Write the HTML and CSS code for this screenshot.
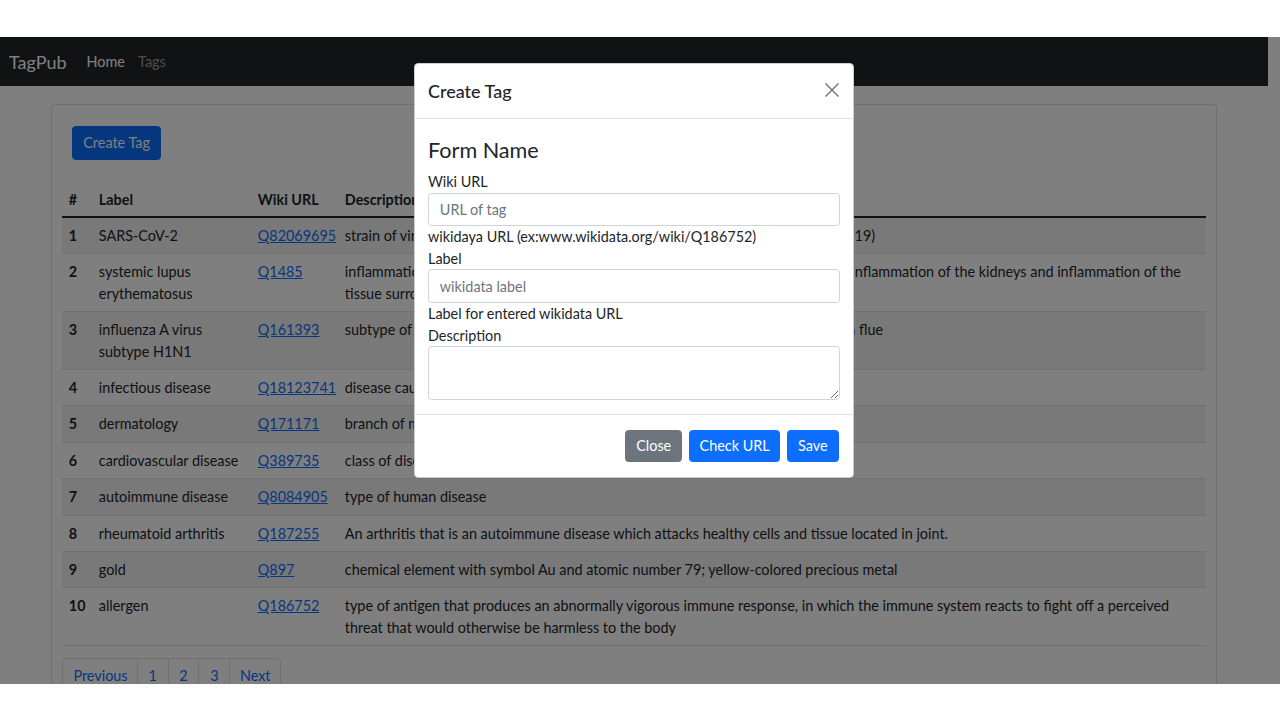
FILE: index.html
```html
<!DOCTYPE html>
<html lang="en">
<head>
<meta charset="utf-8">
<title>TagPub</title>
<link rel="stylesheet" href="styles.css">
</head>
<body>
<div class="top-gap"></div>
<div class="screen">
  <div class="page">
    <nav class="navbar">
      <a class="brand" href="#">TagPub</a>
      <a class="nav-link active" href="#">Home</a>
      <a class="nav-link" href="#">Tags</a>
    </nav>
    <main class="container">
      <div class="card">
        <div class="toolbar"><button class="btn btn-primary">Create Tag</button></div>
        <table class="table">
          <colgroup><col class="c-num"><col class="c-label"><col class="c-url"><col></colgroup>
          <thead>
            <tr><th>#</th><th>Label</th><th>Wiki URL</th><th>Description</th></tr>
          </thead>
          <tbody>
            <tr><th>1</th><td>SARS-CoV-2</td><td><a href="#">Q82069695</a></td><td>strain of virus of the SARS-related coronavirus species causing a disease (COVID-19)</td></tr>
            <tr><th>2</th><td>systemic lupus erythematosus</td><td><a href="#">Q1485</a></td><td>inflammation of many organs, most often skin rashes, inflammation of the joints, inflammation of the kidneys and inflammation of the tissue surrounding the heart and lungs</td></tr>
            <tr><th>3</th><td>influenza A virus subtype H1N1</td><td><a href="#">Q161393</a></td><td>subtype of Influenza A virus which caused a pandemic of 1918, known as Russian flue</td></tr>
            <tr><th>4</th><td>infectious disease</td><td><a href="#">Q18123741</a></td><td>disease caused by pathogenic organisms</td></tr>
            <tr><th>5</th><td>dermatology</td><td><a href="#">Q171171</a></td><td>branch of medicine dealing with the skin</td></tr>
            <tr><th>6</th><td>cardiovascular disease</td><td><a href="#">Q389735</a></td><td>class of diseases that involve the heart or blood vessels</td></tr>
            <tr><th>7</th><td>autoimmune disease</td><td><a href="#">Q8084905</a></td><td>type of human disease</td></tr>
            <tr><th>8</th><td>rheumatoid arthritis</td><td><a href="#">Q187255</a></td><td>An arthritis that is an autoimmune disease which attacks healthy cells and tissue located in joint.</td></tr>
            <tr><th>9</th><td>gold</td><td><a href="#">Q897</a></td><td>chemical element with symbol Au and atomic number 79; yellow-colored precious metal</td></tr>
            <tr><th>10</th><td>allergen</td><td><a href="#">Q186752</a></td><td>type of antigen that produces an abnormally vigorous immune response, in which the immune system reacts to fight off a perceived threat that would otherwise be harmless to the body</td></tr>
          </tbody>
        </table>
        <ul class="pagination">
          <li><a href="#">Previous</a></li>
          <li><a href="#">1</a></li>
          <li><a href="#">2</a></li>
          <li><a href="#">3</a></li>
          <li><a href="#">Next</a></li>
        </ul>
      </div>
    </main>
  </div>
  <div class="backdrop"></div>
  <div class="modal">
    <div class="modal-header">
      <h5 class="modal-title">Create Tag</h5>
      <button class="btn-close" aria-label="Close">
        <svg width="16" height="16" viewBox="0 0 16 16"><path d="M1.5 1.5L14.5 14.5M14.5 1.5L1.5 14.5" stroke="#6f6f6f" stroke-width="1.4" fill="none"/></svg>
      </button>
    </div>
    <div class="modal-body">
      <div class="legend">Form Name</div>
      <label class="form-label">Wiki URL</label>
      <input class="form-control" type="text" placeholder="URL of tag">
      <div class="help">wikidaya URL (ex:www.wikidata.org/wiki/Q186752)</div>
      <label class="form-label">Label</label>
      <input class="form-control" type="text" placeholder="wikidata label">
      <div class="help">Label for entered wikidata URL</div>
      <label class="form-label">Description</label>
      <textarea class="form-control textarea"></textarea>
    </div>
    <div class="modal-footer">
      <button class="btn btn-secondary">Close</button>
      <button class="btn btn-primary">Check URL</button>
      <button class="btn btn-primary">Save</button>
    </div>
  </div>
</div>
</body>
</html>
```
FILE: styles.css
```css
* { box-sizing: border-box; }
html, body { margin: 0; padding: 0; background: #fff; }
body {
  font-family: Lato, "Liberation Sans", sans-serif;
  font-size: 14.4px;
  line-height: 21.4px;
  color: #212529;
}
.top-gap { height: 37px; }
.screen {
  position: relative;
  height: 647px;
  width: 1280px;
  overflow: hidden;
  background: #fff;
}
.page { width: 1268px; }

/* navbar */
.navbar {
  height: 49px;
  background: #212529;
  display: flex;
  align-items: center;
  padding-left: 9px;
  padding-top: 1px;
}
.brand {
  font-size: 18px;
  color: #fff;
  text-decoration: none;
  margin-right: 13.4px;
  line-height: 27px;
}
.nav-link {
  color: rgba(255,255,255,.55);
  text-decoration: none;
  padding: 0 6.6px;
  font-size: 14.4px;
}
.nav-link.active { color: #fff; }

/* container/card */
.container {
  width: 1188px;
  margin: 18px auto 0;
  padding: 0 10.8px;
}
.card {
  border: 1px solid rgba(0,0,0,.125);
  border-radius: 3.6px;
  padding: 21px 10px 20px;
  height: 700px;
}
.toolbar { padding-left: 10px; }
.btn {
  font-family: inherit;
  font-size: 14.4px;
  line-height: 21.6px;
  padding: 5px 10.5px;
  border: 1px solid transparent;
  border-radius: 3.6px;
  color: #fff;
  cursor: pointer;
}
.btn-primary { background: #0d6efd; border-color: #0d6efd; }
.btn-secondary { background: #6c757d; border-color: #6c757d; }

/* table */
.table {
  width: 100%;
  border-collapse: collapse;
  table-layout: fixed;
  margin-top: 21px;
}
.c-num { width: 30px; }
.c-label { width: 159px; }
.c-url { width: 87px; }
.table th, .table td {
  padding: 7px;
  text-align: left;
  vertical-align: top;
  border-bottom: 1px solid #dee2e6;
}
.table thead th {
  font-weight: 700;
  padding-top: 8px;
  padding-bottom: 6px;
  border-bottom: 2px solid #212529;
}
.table tbody th { font-weight: 700; }
.table tbody tr:nth-child(odd) { background: rgba(0,0,0,.05); }
.table a { color: #0d6efd; text-decoration: underline; }

/* pagination */
.pagination {
  list-style: none;
  display: flex;
  margin: 12px 0 0;
  padding: 0;
}
.pagination li a {
  display: block;
  padding: 5.4px 10.8px;
  border: 1px solid #dee2e6;
  margin-left: -1px;
  color: #0d6efd;
  text-decoration: none;
  line-height: 21.6px;
}
.pagination li:first-child a { margin-left: 0; border-radius: 3.6px 0 0 3.6px; padding: 5.4px 9px 5.4px 10.6px; }
.pagination li:last-child a { border-radius: 0 3.6px 3.6px 0; padding: 5.4px 9.5px; }

/* overlay */
.backdrop {
  position: absolute;
  inset: 0;
  background: rgba(0,0,0,.5);
}
.modal {
  position: absolute;
  left: 414px;
  top: 26px;
  width: 440px;
  background: #fff;
  border: 1px solid rgba(0,0,0,.2);
  border-radius: 4.5px;
}
.modal-header {
  display: flex;
  align-items: center;
  justify-content: space-between;
  padding: 14.4px 14.4px 13px 13px;
  border-bottom: 1px solid #dee2e6;
}
.modal-title {
  margin: 0;
  font-size: 18px;
  font-weight: 500;
  line-height: 27px;
}
.btn-close {
  background: none;
  border: 0;
  padding: 0;
  width: 16px;
  height: 16px;
  margin-right: -1px;
  margin-top: -3px;
  display: flex;
}
.modal-body {
  padding: 14.4px 13.4px 14px 13px;
  display: flex;
  flex-direction: column;
}
.legend {
  font-size: 21.6px;
  line-height: 32.4px;
  margin-bottom: 5px;
}
.form-label { display: block; line-height: 21.6px; }
.help { line-height: 21.6px; }
.form-control {
  display: block;
  width: 100%;
  height: 33.5px;
  font-family: inherit;
  font-size: 14.4px;
  line-height: 21.6px;
  padding: 5px 10.8px;
  border: 1px solid #ced4da;
  border-radius: 3.6px;
  color: #212529;
  background: #fff;
}
.form-control::placeholder { color: #6c757d; }
.textarea { height: 54px; resize: vertical; }
.modal-footer {
  display: flex;
  justify-content: flex-end;
  padding: 11px 10.8px 10.4px;
  border-top: 1px solid #dee2e6;
}
.modal-footer .btn { margin: 4px 3.6px; padding: 4.2px 10px; }
.modal-footer .btn:nth-child(2) { padding: 4.2px 9.2px; }
```
